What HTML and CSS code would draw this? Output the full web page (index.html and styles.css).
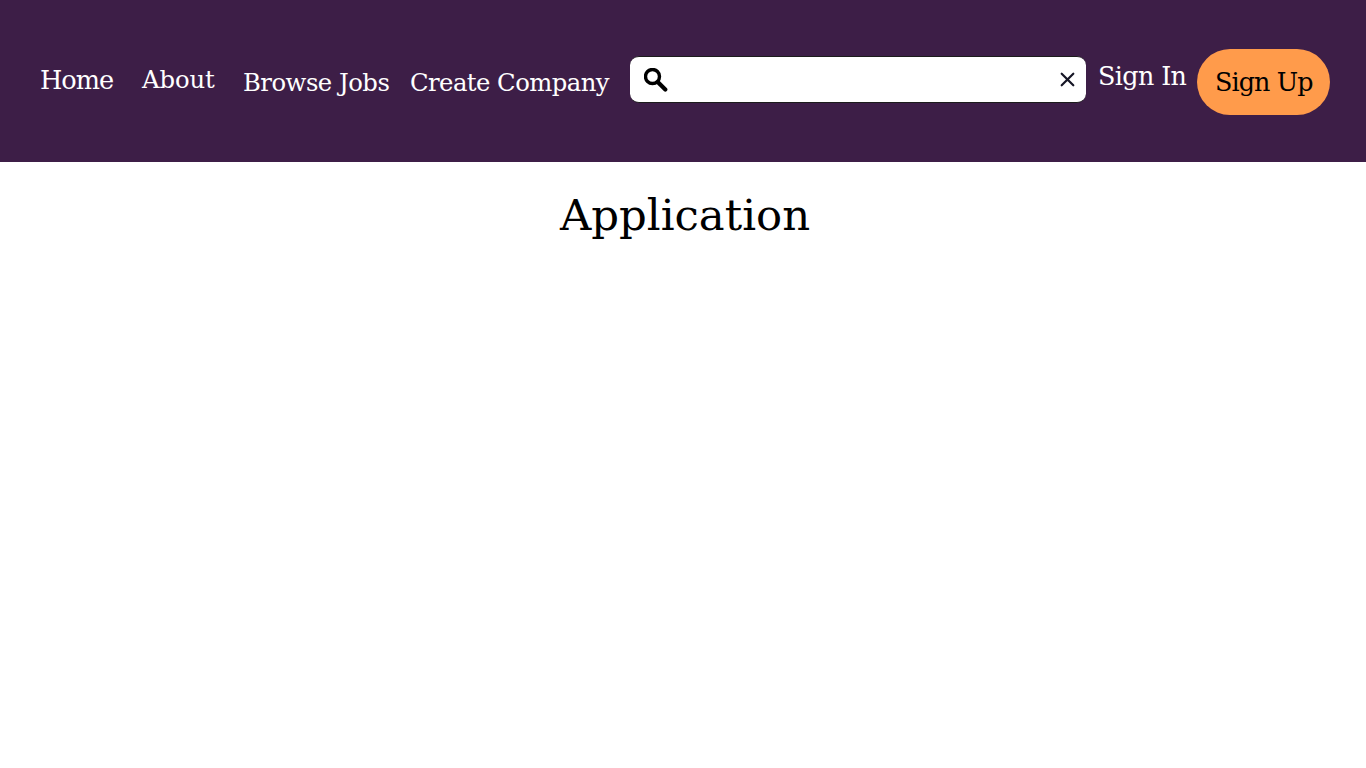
FILE: index.html
```html
<!DOCTYPE html>
<html lang="en">
<head>
<meta charset="utf-8">
<title>Application</title>
<link rel="stylesheet" href="styles.css">
</head>
<body>
<header class="header">
  <nav class="nav">
    <a class="link home">Home</a>
    <a class="link about">About</a>
    <a class="link browse">Browse Jobs</a>
    <a class="link create">Create Company</a>
  </nav>
  <div class="search">
    <svg class="magnifier" width="24" height="24" viewBox="0 0 24 24" fill="none" stroke="#000" stroke-linecap="round"><circle cx="8.5" cy="8.5" r="7" stroke-width="3.4"/><path d="M14 14.2 21.3 21.5" stroke-width="4.2"/></svg>
    <svg class="clear" width="15" height="15" viewBox="0 0 15 15" fill="none" stroke="#161626" stroke-width="2.2" stroke-linecap="round"><path d="M1.7 1.7 13.3 13.3M13.3 1.7 1.7 13.3"/></svg>
  </div>
  <a class="link signin">Sign In</a>
  <a class="signup"><span class="link signup-label">Sign Up</span></a>
</header>
<main class="main">
  <h1 class="title">Application</h1>
</main>
</body>
</html>
```

FILE: styles.css
```css
body { margin: 0; background: #fff; font-family: "DejaVu Serif", serif; }
.header { display: flex; align-items: flex-start; box-sizing: border-box; height: 162px; padding: 49px 36px 0 40px; background: #3d1e47; }
.nav { display: flex; align-items: flex-start; width: 590px; flex: none; }
.link { display: block; flex: none; font-size: 25px; line-height: 30px; color: #fff; white-space: nowrap; }
.home { width: 102px; margin-top: 16px; font-size: 25.6px; letter-spacing: -1px; }
.about { width: 101px; margin-top: 16px; font-size: 24.3px; letter-spacing: -0.1px; }
.browse { width: 167px; margin-top: 19px; font-size: 24.3px; letter-spacing: -0.5px; }
.create { margin-top: 19px; font-size: 24.3px; letter-spacing: -0.55px; }
.search { display: flex; flex: none; align-items: center; justify-content: space-between; box-sizing: border-box; width: 456px; height: 47px; margin-top: 7px; padding: 0 11px 0 14px; background: #fff; border: 1px solid #1c1c1c; border-width: 1px 0; border-radius: 9px; }
.signin { width: 99px; margin: 12px 0 0 12px; font-size: 25.4px; letter-spacing: -0.6px; }
.signup { box-sizing: border-box; width: 133px; height: 66px; padding: 18px 0 0 18px; border-radius: 33px; background: #ff9b4b; }
.signup-label { font-size: 25.4px; letter-spacing: -0.9px; color: #000; }
.title { margin: 0; padding: 27px 0 0 4px; font-size: 43.4px; line-height: 52px; font-weight: 400; text-align: center; color: #000; }
```
